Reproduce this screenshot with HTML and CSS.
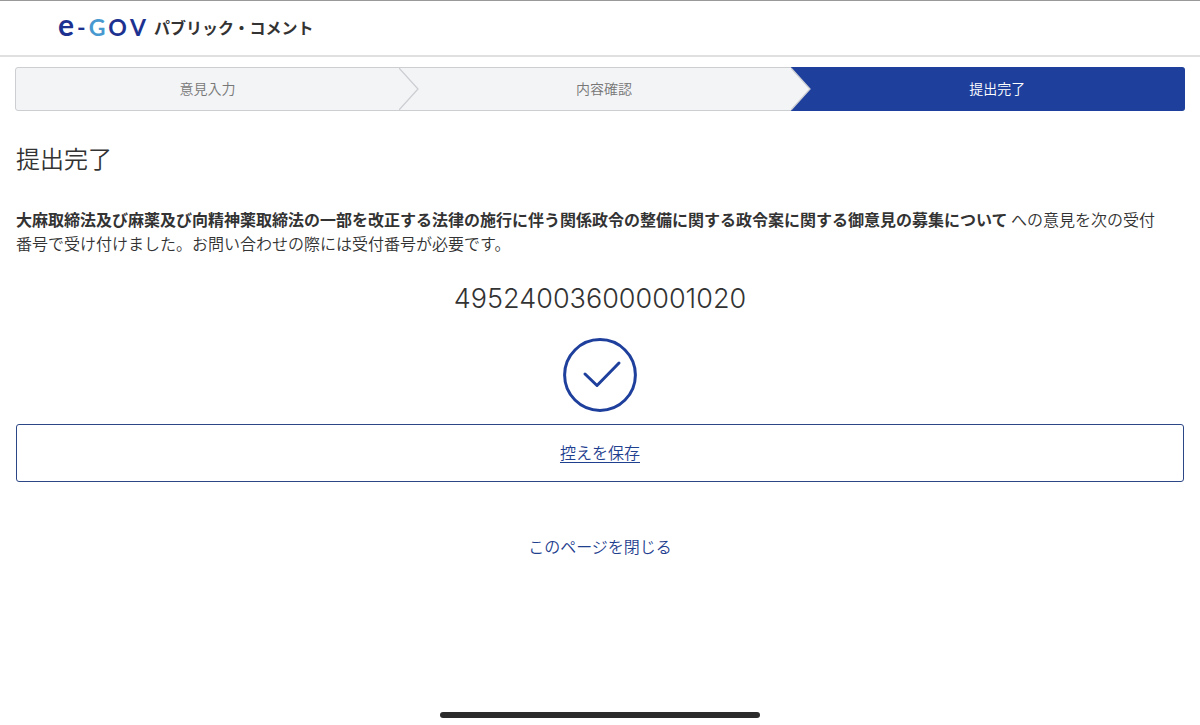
FILE: index.html
```
<!DOCTYPE html>
<html lang="ja">
<head>
    <meta charset="UTF-8">
    <meta name="viewport" content="width=device-width, initial-scale=1.0">
    <title>提出完了 | e-GOV パブリック・コメント</title>
    <link rel="stylesheet" href="styles.css">
</head>
<body>
    <header class="header">
        <div class="logo" aria-label="e-GOV">
            <span class="logo-e">e</span><span>-</span><span class="logo-g">G</span><span>O</span><span>V</span>
        </div>
        <span class="site-name">パブリック・コメント</span>
    </header>

    <main>
        <ol class="steps">
            <li>意見入力</li>
            <li>
                <svg class="arrow" viewBox="0 0 20 42" aria-hidden="true"><path d="M0 0L19 21L0 42"/></svg>
                内容確認
            </li>
            <li class="current" aria-current="step">
                <svg class="arrow" viewBox="0 0 20 42" aria-hidden="true"><path d="M0 0L19 21L0 42"/></svg>
                提出完了
            </li>
        </ol>

        <h1>提出完了</h1>
        <p class="message"><strong>大麻取締法及び麻薬及び向精神薬取締法の一部を改正する法律の施行に伴う関係政令の整備に関する政令案に関する御意見の募集について</strong> への意見を次の受付番号で受け付けました。お問い合わせの際には受付番号が必要です。</p>

        <p class="number">495240036000001020</p>
        <svg class="check" viewBox="0 0 74 74" aria-hidden="true">
            <circle cx="37" cy="37" r="35.4"/>
            <path d="M22 36L34 47.500L56 25"/>
        </svg>

        <button type="button" class="save">控えを保存</button>
        <a href="#" class="close">このページを閉じる</a>
    </main>

    <div class="home-bar"></div>
</body>
</html>
```
FILE: styles.css
```
* {
    margin: 0;
    padding: 0;
    box-sizing: border-box;
}

body {
    background: #fff;
    color: #333;
    font-family: "Noto Sans CJK JP", sans-serif;
    font-size: 16px;
    font-weight: 350;
    line-height: 24px;
}

.header {
    display: flex;
    align-items: center;
    gap: 8px;
    height: 57px;
    padding: 0 58px 2px;
    border-top: 1px solid #999;
    border-bottom: 2px solid #e0e0e0;
}

.logo {
    display: flex;
    align-items: baseline;
    gap: 3px;
    padding-bottom: 4px;
    color: #1d3290;
    font-family: Lato, sans-serif;
    font-size: 23px;
    font-weight: 700;
}

.logo-e {
    font-size: 30px;
}

.logo-g {
    color: #4799cf;
}

.site-name {
    font-weight: 700;
}

main {
    padding: 10px 16px 40px;
}

.steps {
    display: grid;
    grid-template-columns: 39fr 40fr 40fr;
    margin: 0 -1px;
    border: 1px solid #ccced2;
    border-radius: 3px;
    background: #f3f4f6;
    color: #777;
    font-size: 14px;
    line-height: 40px;
    text-align: center;
    list-style: none;
}

.steps li {
    position: relative;
    padding-bottom: 2px;
}

.steps li + li {
    padding-left: 18px;
}

.steps .current {
    margin: -1px -1px -1px 0;
    padding-top: 1px;
    padding-bottom: 3px;
    border-radius: 0 3px 3px 0;
    background: #1e3f9c;
    color: #fff;
}

.arrow {
    position: absolute;
    top: 0;
    left: 0;
    width: 20px;
    height: 100%;
    fill: #f3f4f6;
    stroke: #ccced2;
    stroke-width: 1.3;
}

h1 {
    margin-top: 29px;
    font-size: 24px;
    font-weight: 350;
    line-height: 36px;
}

.message {
    margin-top: 31px;
    padding-right: 16px;
}

.message strong {
    font-weight: 700;
}

.number {
    margin-top: 24px;
    font-family: Inter, sans-serif;
    font-size: 27px;
    font-weight: 300;
    line-height: 40px;
    text-align: center;
}

.check {
    display: block;
    width: 74px;
    margin: 19px auto 12px;
    fill: none;
    stroke: #1e3f9c;
    stroke-width: 3;
    stroke-linecap: round;
    stroke-linejoin: round;
}

.save {
    display: block;
    width: 100%;
    height: 58px;
    padding-bottom: 2px;
    border: 1px solid #2c4785;
    border-radius: 3px;
    background: #fff;
    color: #1f3f8f;
    font: inherit;
    text-decoration: underline;
    text-underline-offset: 3px;
    cursor: pointer;
}

.close {
    display: block;
    width: fit-content;
    margin: 52px auto 0;
    color: #1f3f8f;
    text-decoration: none;
}

.home-bar {
    position: fixed;
    bottom: 7px;
    left: 50%;
    width: 320px;
    height: 6px;
    border-radius: 3px;
    background: #2b2b2b;
    transform: translateX(-50%);
}
```
